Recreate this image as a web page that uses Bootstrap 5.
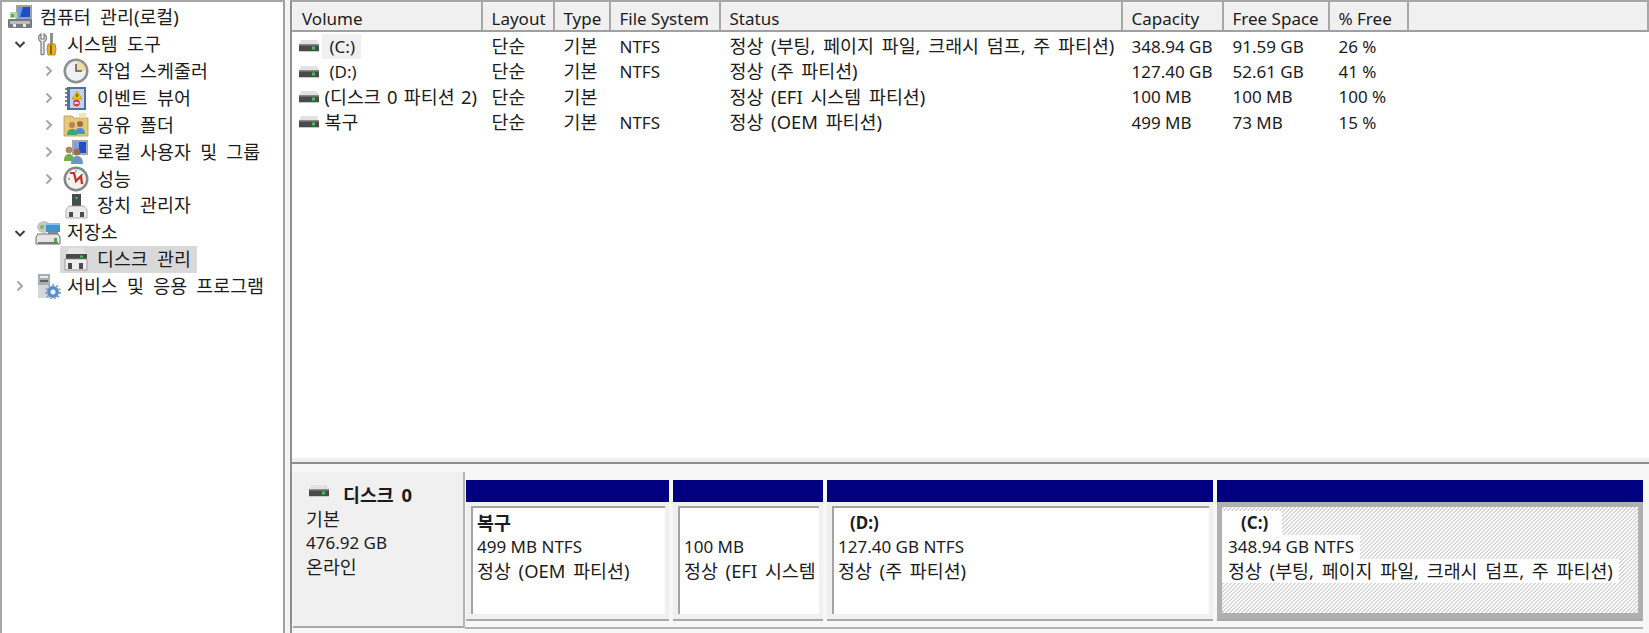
<!DOCTYPE html>
<html lang="ko">
<head>
<meta charset="utf-8">
<title>컴퓨터 관리</title>
<link href="https://cdn.jsdelivr.net/npm/bootstrap@5.3.0/dist/css/bootstrap.min.css" rel="stylesheet">
<style>
html,body{height:633px;overflow:hidden}
body{background:#fff;color:#1c1c1c;font-family:"Noto Sans","Noto Sans CJK KR",sans-serif;font-size:17px}
.ko{font-size:18.4px;word-spacing:3px;line-height:1}
.app{height:633px}
.tree-pane{width:285px;flex:none;border-left:2px solid #a6a6a6;border-right:2px solid #a0a0a0;border-top:2px solid #a6a6a6;padding-top:2px}
.tree-pane .ko{word-spacing:4.5px}
.splitter{width:5px;flex:none;background:#f4f4f4}
.right-pane{width:1359px;flex:none;border-left:2px solid #8f8f8f;border-top:2px solid #a6a6a6}
.tree-list{list-style:none;margin:0;padding:0}
.tree-row{height:26.9px;white-space:nowrap}
.tw{width:12px;height:12px;flex:none;display:block}
.tree-ico{width:26px;height:26px;flex:none;display:block}
.lv0{padding-left:5px}.lv0 .tree-ico{margin-right:7px}
.lv1{padding-left:12px}.lv1 .tree-ico{margin-left:9px;margin-right:6px}
.lv2{padding-left:41px}.lv2 .tree-ico{margin-left:8px;margin-right:8px}
.sel-box{background:#d9d9d9;height:27px;margin-left:5px;padding-left:3px;width:137px}
.sel-box .tree-ico{margin:0 8px 0 0}
.top-part{height:462px;border-bottom:2px solid #8f8f8f;overflow:hidden;background:linear-gradient(#fff 456px,#efefef 456px)}
.vol-table{table-layout:fixed;width:1357px;margin:0;--bs-table-bg:transparent;--bs-table-color:#1c1c1c}
.vol-table th{height:28px;background:#f0f0f0;font-weight:400;padding:4px 0 0 9px;border-left:1px solid #fbfbfb;border-right:2px solid #a8a8a8;border-bottom:2px solid #a0a0a0;border-top:1px solid #f8f8f8;white-space:nowrap;vertical-align:middle;overflow:hidden;line-height:1}
.vol-table td{height:25.4px;padding:0 0 0 10px;white-space:nowrap;vertical-align:middle;overflow:hidden;line-height:1}
.vol-table tbody::before{content:"";display:block;height:2px}
.vol-table td.vol-cell{padding-left:5px}
.c1{width:189px}.c2{width:72px}.c3{width:56px}.c4{width:110px}.c5{width:402px}.c6{width:101px}.c7{width:106px}.c8{width:79px}
.drv{width:22px;height:14px;flex:none;display:block}
.vol-name{margin-left:5px;word-spacing:1.5px}
.vol-first{background:#f0f0f0;margin-left:2px;padding:0 6px 0 8px;height:25px;display:flex;align-items:center}
.vol-sp{margin-left:10px}
.disk-area{height:169px;background:#f7f7f7;padding-top:8px;padding-left:1px}
.disk-info{width:172px;height:156px;flex:none;background:#f0f0f0;border-right:2px solid #b4b4b4;border-bottom:2px solid #a8a8a8;padding:11px 0 0 13px;line-height:24px}
.disk-info .ko{line-height:24px}
.disk-title{margin-left:2px}
.disk-title .drv{margin-right:13px;margin-bottom:8px}
.disk-parts{gap:4px;padding-left:1px;padding-top:8px;height:157px;border-bottom:2px solid #b4b4b4;width:1178px}
.part{flex:none;background:#f0f0f0;border-bottom:2px solid #a8a8a8;height:141px}
.part-bar{height:22px;background:#000080}
.part-box{height:108px;margin:4px 4px 0 5px;background:#fff;border-top:2px solid #a4a4a4;border-left:2px solid #a4a4a4;padding:3px 0 0 4px;line-height:24px;white-space:nowrap;overflow:hidden}
.part-box .ko{line-height:24px}
.p-rec{width:203px}.p-efi{width:150px}.p-d{width:386px}.p-c{width:426px;background:#b0b0b0}
.p-c .part-box{margin:5px 5px 0 5px;height:106px;border:0;padding:4px 0 0 0;background:repeating-linear-gradient(-45deg,#d6d6d6 0,#d6d6d6 1px,#fff 1px,#fff 2.828px)}
.bold-line{font-weight:700}
.indent{padding-left:12px}
.p-c .wline{display:block;width:max-content;background:#fff;padding:0 6px}
.p-c .bold-line{padding:0 14px 0 19px}
</style>
</head>
<body>
<svg width="0" height="0" class="position-absolute">
<defs>
<symbol id="i-drive" viewBox="0 0 22 14">
<path d="M3 1h16l2 5H1z" fill="#e2e2e2"/><rect x="1" y="5" width="20" height="7" fill="#4a4a4a"/><rect x="1" y="5" width="20" height="1.5" fill="#8a8a8a"/><rect x="14" y="7.5" width="3" height="3" fill="#2fd04a"/><rect x="1" y="12" width="20" height="1" fill="#c8c8c8"/>
</symbol>
<symbol id="i-root" viewBox="0 0 26 26">
<rect x="9" y="1" width="16" height="14" fill="#9ea3a8"/><rect x="11" y="3" width="12" height="10" fill="#1f4fc4"/><path d="M11 3h5l-3 10h-2z" fill="#6f96e6"/><rect x="3" y="8" width="7" height="6" fill="#bcd2a8"/><rect x="4" y="10" width="3" height="3" fill="#4fb04f"/>
<rect x="1" y="15" width="24" height="9" rx="1" fill="#77797c"/><rect x="3" y="17" width="20" height="3" fill="#b9bcbf"/><rect x="6" y="20" width="3" height="3" fill="#e8e8e8"/><rect x="16" y="20" width="3" height="3" fill="#e8e8e8"/>
</symbol>
<symbol id="i-tools" viewBox="0 0 26 26">
<path d="M6 3c-2 1-3 3-2 6l2 2v12c0 1 3 1 3 0V11l2-2c1-3 0-5-2-6v5H6z" fill="#e8e8e8" stroke="#77797c" stroke-width="1.2"/>
<rect x="15" y="2" width="3" height="11" fill="#8c8e90"/><path d="M13 13h7l1 5-1 6h-7l-1-6z" fill="#e6b422" stroke="#a27a10" stroke-width=".8"/><rect x="15" y="14" width="2" height="9" fill="#8a5f08"/>
</symbol>
<symbol id="i-clock" viewBox="0 0 26 26">
<circle cx="13" cy="13" r="12.5" fill="#8d8f91"/><circle cx="13" cy="13" r="10" fill="#eef0f2"/><path d="M13 3a10 10 0 0 1 10 10h-10z" fill="#f3d9a8"/><path d="M13 6v7h6" fill="none" stroke="#55575a" stroke-width="1.5"/>
</symbol>
<symbol id="i-event" viewBox="0 0 26 26">
<rect x="4" y="2" width="19" height="23" fill="#4f72a6"/><rect x="7" y="4" width="14" height="19" fill="#c6d3e6"/><path d="M4 4h-2M4 8h-2M4 12h-2M4 16h-2M4 20h-2" stroke="#55595f" stroke-width="1.4"/><path d="M14 6l5 8H9z" fill="#f2c21a" stroke="#a8840c" stroke-width=".6"/><rect x="13.400" y="9" width="1.4" height="3" fill="#4a3a08"/><circle cx="13.500" cy="18" r="3.4" fill="#d84040"/><rect x="11.500" y="17.200" width="4" height="1.6" fill="#fff"/>
</symbol>
<symbol id="i-share" viewBox="0 0 26 26">
<path d="M1 4h8l2 2h14v18H1z" fill="#e6c878" stroke="#b69a4e" stroke-width=".8"/><path d="M16 1h7v5h-7z" fill="#f2e4b8"/><circle cx="9" cy="13" r="3" fill="#b5835a"/><path d="M4 23c0-4 2-6 5-6s5 2 5 6z" fill="#3fa86a"/><circle cx="17" cy="12" r="3" fill="#9a6e48"/><path d="M12 22c0-4 2-6 5-6s5 2 5 6z" fill="#4b8fc8"/>
</symbol>
<symbol id="i-users" viewBox="0 0 26 26">
<rect x="9" y="1" width="16" height="15" fill="#a4a8ac"/><rect x="11" y="3" width="12" height="11" fill="#1f4fc4"/><rect x="11" y="3" width="5" height="11" fill="#7fa0e6"/><circle cx="6" cy="11" r="3.3" fill="#b5835a"/><path d="M1 22c0-5 2-7 5-7s5 2 5 7z" fill="#6fb04e"/><circle cx="14" cy="13" r="3.4" fill="#9a6e48"/><path d="M8 25c0-5 2-8 6-8s6 3 6 8z" fill="#6b97c4"/>
</symbol>
<symbol id="i-perf" viewBox="0 0 26 26">
<circle cx="13" cy="13" r="12.5" fill="#85888a"/><circle cx="13" cy="13" r="10" fill="#f2f3ef"/><path d="M7 7l4 0 2 8 5-5 1 8" fill="none" stroke="#cf2626" stroke-width="2.2"/><path d="M13 4v2M20 8l-1 1M5 13h2" stroke="#6da65a" stroke-width="1.3"/>
</symbol>
<symbol id="i-dev" viewBox="0 0 26 26">
<rect x="9" y="1" width="9" height="13" fill="#4a4c4e"/><rect x="12.500" y="4" width="2" height="2" fill="#2fd04a"/><path d="M6 13h15l3 4v8H3v-8z" fill="#ececec" stroke="#9a9c9e" stroke-width=".8"/><rect x="6" y="19" width="4" height="5" fill="#4a4c4e"/><rect x="17" y="19" width="4" height="5" fill="#4a4c4e"/>
</symbol>
<symbol id="i-store" viewBox="0 0 26 26">
<ellipse cx="9" cy="7" rx="7" ry="6" fill="#c4c8c4"/><ellipse cx="7" cy="7" rx="2" ry="2" fill="#77b85a"/><rect x="11" y="3" width="14" height="9" fill="#3f93cf"/><rect x="11" y="3" width="14" height="2" fill="#8cc6ea"/><rect x="13" y="12" width="10" height="2" fill="#8a8c8e"/>
<path d="M3 14h20l2 3v7H1v-7z" fill="#e4e4e2" stroke="#6f7173"/><rect x="19" y="18" width="3" height="4" fill="#3fb04a"/><rect x="3" y="22" width="20" height="2" fill="#77797b"/>
</symbol>
<symbol id="i-dm" viewBox="0 0 26 26">
<path d="M6 2h14l3 6H3z" fill="#e4e4e4"/><rect x="3" y="8" width="21" height="5" fill="#47494b"/><rect x="17" y="9.500" width="3" height="2" fill="#2fd04a"/><path d="M2 13h22v11H2z" fill="#eeeeee" stroke="#8a8c8e" stroke-width=".8"/><rect x="5" y="17" width="4" height="6" fill="#4a4c4e"/><rect x="16" y="17" width="4" height="6" fill="#4a4c4e"/>
</symbol>
<symbol id="i-svc" viewBox="0 0 26 26">
<rect x="3" y="1" width="12" height="24" fill="#a9adb1"/><rect x="5" y="3" width="8" height="2" fill="#e8eaec"/><rect x="5" y="7" width="8" height="2" fill="#5d6064"/><rect x="3" y="12" width="12" height="13" fill="#d5d7d9"/>
<circle cx="18" cy="19" r="6" fill="#5c8cc4"/><circle cx="18" cy="19" r="7" fill="none" stroke="#7ea6d4" stroke-width="2" stroke-dasharray="2 2"/><circle cx="18" cy="19" r="2.500" fill="#eef4fa"/>
</symbol>
<symbol id="c-open" viewBox="0 0 12 12"><path d="M1.500 4l4.500 4.500L10.500 4" fill="none" stroke="#404040" stroke-width="2"/></symbol>
<symbol id="c-closed" viewBox="0 0 12 12"><path d="M3.500 1.500L8 6l-4.500 4.500" fill="none" stroke="#a6a6a6" stroke-width="2"/></symbol>
</defs>
</svg>

<div class="app d-flex">
  <aside class="tree-pane">
    <ul class="tree-list">
      <li class="tree-row lv0 d-flex align-items-center"><svg class="tree-ico"><use href="#i-root"/></svg><span class="ko">컴퓨터 관리(로컬)</span></li>
      <li class="tree-row lv1 d-flex align-items-center"><svg class="tw"><use href="#c-open"/></svg><svg class="tree-ico"><use href="#i-tools"/></svg><span class="ko">시스템 도구</span></li>
      <li class="tree-row lv2 d-flex align-items-center"><svg class="tw"><use href="#c-closed"/></svg><svg class="tree-ico"><use href="#i-clock"/></svg><span class="ko">작업 스케줄러</span></li>
      <li class="tree-row lv2 d-flex align-items-center"><svg class="tw"><use href="#c-closed"/></svg><svg class="tree-ico"><use href="#i-event"/></svg><span class="ko">이벤트 뷰어</span></li>
      <li class="tree-row lv2 d-flex align-items-center"><svg class="tw"><use href="#c-closed"/></svg><svg class="tree-ico"><use href="#i-share"/></svg><span class="ko">공유 폴더</span></li>
      <li class="tree-row lv2 d-flex align-items-center"><svg class="tw"><use href="#c-closed"/></svg><svg class="tree-ico"><use href="#i-users"/></svg><span class="ko">로컬 사용자 및 그룹</span></li>
      <li class="tree-row lv2 d-flex align-items-center"><svg class="tw"><use href="#c-closed"/></svg><svg class="tree-ico"><use href="#i-perf"/></svg><span class="ko">성능</span></li>
      <li class="tree-row lv2 d-flex align-items-center"><span class="tw"></span><svg class="tree-ico"><use href="#i-dev"/></svg><span class="ko">장치 관리자</span></li>
      <li class="tree-row lv1 d-flex align-items-center"><svg class="tw"><use href="#c-open"/></svg><svg class="tree-ico"><use href="#i-store"/></svg><span class="ko">저장소</span></li>
      <li class="tree-row lv2 d-flex align-items-center"><span class="tw"></span><div class="sel-box d-flex align-items-center"><svg class="tree-ico"><use href="#i-dm"/></svg><span class="ko">디스크 관리</span></div></li>
      <li class="tree-row lv1 d-flex align-items-center"><svg class="tw"><use href="#c-closed"/></svg><svg class="tree-ico"><use href="#i-svc"/></svg><span class="ko">서비스 및 응용 프로그램</span></li>
    </ul>
  </aside>
  <div class="splitter"></div>
  <main class="right-pane d-flex flex-column">
    <div class="top-part">
      <table class="table table-borderless vol-table">
        <colgroup><col class="c1"><col class="c2"><col class="c3"><col class="c4"><col class="c5"><col class="c6"><col class="c7"><col class="c8"><col></colgroup>
        <thead><tr><th>Volume</th><th>Layout</th><th>Type</th><th>File System</th><th>Status</th><th>Capacity</th><th>Free Space</th><th>% Free</th><th></th></tr></thead>
        <tbody>
          <tr><td class="vol-cell"><div class="d-flex align-items-center"><svg class="drv"><use href="#i-drive"/></svg><span class="vol-first">(C:)</span></div></td><td class="ko">단순</td><td class="ko">기본</td><td>NTFS</td><td class="ko">정상 (부팅, 페이지 파일, 크래시 덤프, 주 파티션)</td><td>348.94 GB</td><td>91.59 GB</td><td>26 %</td><td></td></tr>
          <tr><td class="vol-cell"><div class="d-flex align-items-center"><svg class="drv"><use href="#i-drive"/></svg><span class="vol-sp">(D:)</span></div></td><td class="ko">단순</td><td class="ko">기본</td><td>NTFS</td><td class="ko">정상 (주 파티션)</td><td>127.40 GB</td><td>52.61 GB</td><td>41 %</td><td></td></tr>
          <tr><td class="vol-cell"><div class="d-flex align-items-center"><svg class="drv"><use href="#i-drive"/></svg><span class="vol-name ko">(디스크 0 파티션 2)</span></div></td><td class="ko">단순</td><td class="ko">기본</td><td></td><td class="ko">정상 (EFI 시스템 파티션)</td><td>100 MB</td><td>100 MB</td><td>100 %</td><td></td></tr>
          <tr><td class="vol-cell"><div class="d-flex align-items-center"><svg class="drv"><use href="#i-drive"/></svg><span class="vol-name ko">복구</span></div></td><td class="ko">단순</td><td class="ko">기본</td><td>NTFS</td><td class="ko">정상 (OEM 파티션)</td><td>499 MB</td><td>73 MB</td><td>15 %</td><td></td></tr>
        </tbody>
      </table>
    </div>
    <div class="disk-area d-flex">
      <div class="disk-info">
        <div class="disk-title d-flex align-items-center fw-bold"><svg class="drv"><use href="#i-drive"/></svg><span class="ko">디스크 0</span></div>
        <div class="ko">기본</div>
        <div>476.92 GB</div>
        <div class="ko">온라인</div>
      </div>
      <div class="disk-parts d-flex">
        <section class="part p-rec"><div class="part-bar"></div><div class="part-box"><div class="bold-line ko">복구</div><div>499 MB NTFS</div><div class="ko">정상 (OEM 파티션)</div></div></section>
        <section class="part p-efi"><div class="part-bar"></div><div class="part-box"><div class="bold-line">&nbsp;</div><div>100 MB</div><div class="ko">정상 (EFI 시스템</div></div></section>
        <section class="part p-d"><div class="part-bar"></div><div class="part-box"><div class="bold-line indent">(D:)</div><div>127.40 GB NTFS</div><div class="ko">정상 (주 파티션)</div></div></section>
        <section class="part p-c"><div class="part-bar"></div><div class="part-box"><div class="bold-line wline">(C:)</div><div class="wline">348.94 GB NTFS</div><div class="wline ko">정상 (부팅, 페이지 파일, 크래시 덤프, 주 파티션)</div></div></section>
      </div>
    </div>
  </main>
</div>
</body>
</html>
